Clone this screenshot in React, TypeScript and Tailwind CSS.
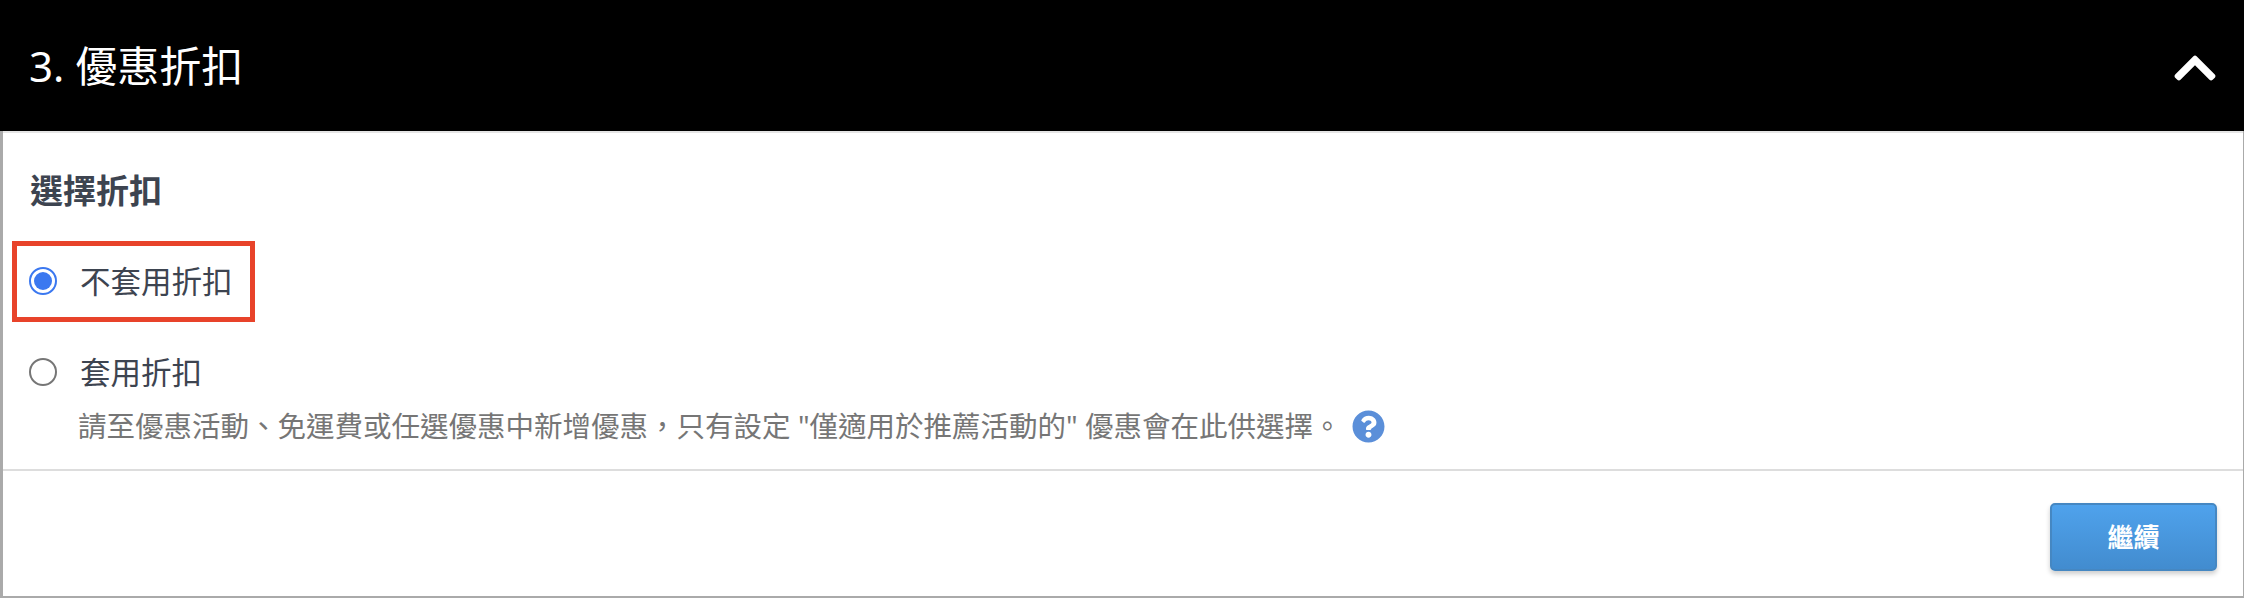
import { FaChevronUp, FaQuestionCircle } from "react-icons/fa";

const FONT = "font-['Noto_Sans','Noto_Sans_CJK_TC',sans-serif]";

function Radio({ checked }: { checked?: boolean }) {
  return (
    <span
      className={`flex h-[28px] w-[28px] shrink-0 items-center justify-center rounded-full border-[2px] bg-white ${
        checked ? "border-[#3b78f0]" : "border-[#767676]"
      }`}
    >
      {checked && <span className="h-[18px] w-[18px] rounded-full bg-[#3b78f0]" />}
    </span>
  );
}

export default function App() {
  return (
    <div className={`h-[598px] w-[2244px] bg-white ${FONT}`}>
      {/* Section header */}
      <div className="flex h-[131px] items-center justify-between bg-black pl-[29px] pr-[25px] text-white">
        <h2 className="text-[42px] leading-none">3. 優惠折扣</h2>
        <FaChevronUp size={48} className="mt-[4px]" />
      </div>

      {/* Section body */}
      <div className="flex h-[467px] flex-col border-b-[2px] border-l-[3px] border-r-[1px] border-[#aaaaaa]">
        <div className="h-[2px] bg-[#e5e5e5]" />
        <div className="h-[338px] border-b-[2px] border-[#dddddd] pl-[27px]">
          <h3 className="mt-[36px] text-[33px] font-bold leading-[44px] text-[#3d4450]">選擇折扣</h3>

          <label className="-ml-[18px] mt-[28px] flex h-[81px] w-[243px] items-center border-[5px] border-[#e8432a] pb-[1px] pl-[12px]">
            <Radio checked />
            <span className="ml-[23px] text-[30.5px] leading-none text-[#3d4450]">不套用折扣</span>
          </label>

          <label className="-ml-[1px] mt-[28px] flex items-center">
            <Radio />
            <span className="ml-[23px] text-[30.5px] leading-[44px] text-[#3d4450]">套用折扣</span>
          </label>

          <p className="ml-[48px] mt-[12px] flex items-center text-[28.5px] leading-[40px] text-[#767676]">
            請至優惠活動、免運費或任選優惠中新增優惠，只有設定 "僅適用於推薦活動的" 優惠會在此供選擇。
            <FaQuestionCircle size={33} className="ml-[10px] text-[#5b8fd9]" />
          </p>
        </div>

        {/* Footer */}
        <div className="flex flex-1 items-start justify-end pr-[26px] pt-[32px]">
          <button className="h-[68px] w-[167px] rounded-[5px] border-[2px] border-[#4587c2] bg-gradient-to-b from-[#4fa2ec] to-[#428ccf] text-[26px] font-bold text-white shadow-[0_3px_5px_rgba(0,0,0,0.2)]">
            繼續
          </button>
        </div>
      </div>
    </div>
  );
}
